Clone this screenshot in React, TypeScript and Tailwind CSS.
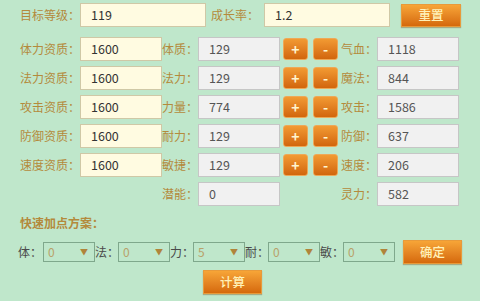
import React from "react";

const font = { fontFamily: '"Noto Sans CJK SC", "Noto Sans", sans-serif' };

function Label({ t, w }: { t: string; w: string }) {
  return (
    <div className={`${w} shrink-0 whitespace-nowrap text-[12px] leading-[24px] text-[#b48a3c]`}>{t}</div>
  );
}

function Cream({ v, w }: { v: string; w: string }) {
  return (
    <div className={`${w} h-[24px] shrink-0 border border-[#cfc8a6] bg-[#fffbe1] pl-[10px] text-[12.5px] leading-[22px] text-[#333]`}>
      {v}
    </div>
  );
}

function Grey({ v }: { v: string }) {
  return (
    <div className="w-[82px] h-[24px] shrink-0 border border-[#c6c6c6] bg-[#f1f1f1] pl-[10px] text-[12.5px] leading-[22px] text-[#555]">
      {v}
    </div>
  );
}

function OrangeBtn({ t, w, h }: { t: string; w: string; h: string }) {
  return (
    <div
      className={`${w} ${h} shrink-0 flex items-center justify-center border border-[#e89a3a] bg-gradient-to-b from-[#f7a537] to-[#d5690b] text-[12.5px] font-medium text-[#fff1b8] shadow-[0_1px_1px_rgba(120,60,0,0.35)]`}
    >
      {t}
    </div>
  );
}

function Small({ t }: { t: string }) {
  return (
    <div className="w-[25px] h-[22px] shrink-0 flex items-center justify-center rounded-[3px] border border-[#eea857] bg-gradient-to-b from-[#f29a32] to-[#d2660c] text-[14px] font-bold leading-none text-[#fff6d0]">
      {t}
    </div>
  );
}

function StatRow({ a, av, b, bv, c, cv, btn = true }: { a?: string; av?: string; b: string; bv: string; c: string; cv: string; btn?: boolean }) {
  return (
    <div className="flex h-[24px] items-center pl-[20px]">
      {a ? (
        <>
          <Label t={a} w="w-[60px]" />
          <Cream v={av!} w="w-[82px]" />
        </>
      ) : (
        <div className="w-[142px] shrink-0" />
      )}
      <Label t={b} w="w-[36px]" />
      <Grey v={bv} />
      {btn ? (
        <div className="flex items-center gap-[5px] ml-[3px] w-[58px] shrink-0">
          <Small t="+" />
          <Small t="-" />
        </div>
      ) : (
        <div className="ml-[3px] w-[58px] shrink-0" />
      )}
      <Label t={c} w="w-[36px]" />
      <Grey v={cv} />
    </div>
  );
}

function Sel({ v }: { v: string }) {
  return (
    <div className="w-[52px] h-[20px] shrink-0 flex items-center justify-between border border-[#7fa88c] pl-[4px] pr-[6px] text-[12px] text-[#b9a169]">
      <span>{v}</span>
      <span className="text-[8px] text-[#b0843a]">▼</span>
    </div>
  );
}

function SelLabel({ t, w }: { t: string; w: string }) {
  return <div className={`${w} shrink-0 whitespace-nowrap text-[12px] text-[#4a4a4a]`}>{t}</div>;
}

export default function App() {
  return (
    <div className="w-[480px] h-[301px] overflow-hidden bg-[#bfe7cb]" style={font}>
      <div className="flex h-[24px] items-center pl-[20px] mt-[3px]">
        <Label t="目标等级：" w="w-[60px]" />
        <Cream v="119" w="w-[126px]" />
        <div className="ml-[5px]">
          <Label t="成长率：" w="w-[53px]" />
        </div>
        <Cream v="1.2" w="w-[126px]" />
        <div className="ml-[11px]">
          <OrangeBtn t="重置" w="w-[60px]" h="h-[23px]" />
        </div>
      </div>
      <div className="flex flex-col gap-[5px] mt-[10px]">
        <StatRow a="体力资质：" av="1600" b="体质：" bv="129" c="气血：" cv="1118" />
        <StatRow a="法力资质：" av="1600" b="法力：" bv="129" c="魔法：" cv="844" />
        <StatRow a="攻击资质：" av="1600" b="力量：" bv="774" c="攻击：" cv="1586" />
        <StatRow a="防御资质：" av="1600" b="耐力：" bv="129" c="防御：" cv="637" />
        <StatRow a="速度资质：" av="1600" b="敏捷：" bv="129" c="速度：" cv="206" />
        <StatRow b="潜能：" bv="0" c="灵力：" cv="582" btn={false} />
      </div>
      <div className="mt-[8px] pl-[20px] text-[12px] leading-[18px] font-bold text-[#b48a3c]">快速加点方案：</div>
      <div className="mt-[8px] flex h-[24px] items-center pl-[18px]">
        <SelLabel t="体：" w="w-[25px]" />
        <Sel v="0" />
        <SelLabel t="法：" w="w-[23px]" />
        <Sel v="0" />
        <SelLabel t="力：" w="w-[23px]" />
        <Sel v="5" />
        <SelLabel t="耐：" w="w-[23px]" />
        <Sel v="0" />
        <SelLabel t="敏：" w="w-[23px]" />
        <Sel v="0" />
        <div className="ml-[8px]">
          <OrangeBtn t="确定" w="w-[59px]" h="h-[24px]" />
        </div>
      </div>
      <div className="mt-[6px] ml-[203px]">
        <OrangeBtn t="计算" w="w-[59px]" h="h-[24px]" />
      </div>
    </div>
  );
}
